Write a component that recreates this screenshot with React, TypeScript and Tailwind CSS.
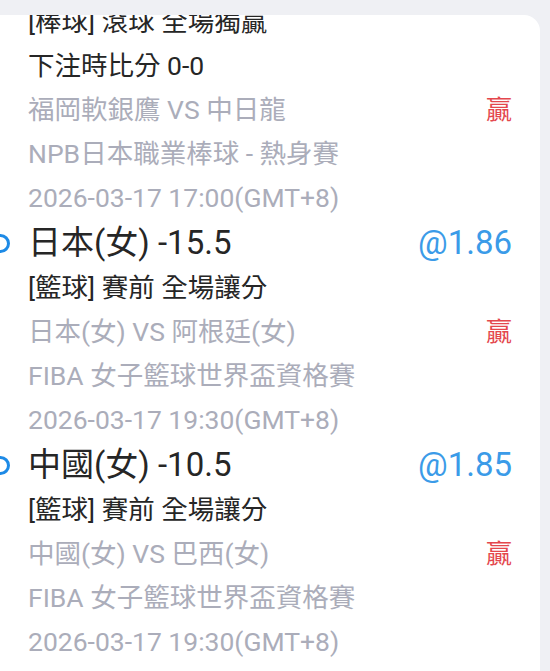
import React from "react";

type Bet = {
  title: string;
  odds: string;
  market: string;
  teams: string;
  league: string;
  date: string;
};

const bets: Bet[] = [
  {
    title: "日本(女) -15.5",
    odds: "@1.86",
    market: "[籃球] 賽前 全場讓分",
    teams: "日本(女) VS 阿根廷(女)",
    league: "FIBA 女子籃球世界盃資格賽",
    date: "2026-03-17 19:30(GMT+8)",
  },
  {
    title: "中國(女) -10.5",
    odds: "@1.85",
    market: "[籃球] 賽前 全場讓分",
    teams: "中國(女) VS 巴西(女)",
    league: "FIBA 女子籃球世界盃資格賽",
    date: "2026-03-17 19:30(GMT+8)",
  },
];

const font = { fontFamily: "Roboto, 'Noto Sans CJK TC', 'Noto Sans', sans-serif" };

function Line({ children, tone = "gray", win = false }: { children: React.ReactNode; tone?: "gray" | "dark"; win?: boolean }) {
  return (
    <div className="flex h-[44px] items-center justify-between pr-[28px] pl-[28px]">
      <span className={tone === "dark" ? "text-[26.5px] text-[#262626]" : "text-[26.5px] text-[#abadba]"}>{children}</span>
      {win && <span className="text-[26px] text-[#e4474d]">贏</span>}
    </div>
  );
}

function Title({ title, odds }: { title: string; odds: string }) {
  return (
    <div className="relative flex h-[46px] items-center justify-between pr-[28px] pl-[28px]">
      <span className="absolute left-[-9px] top-[14px] h-[19px] w-[19px] rounded-full border-[3px] border-[#1d8ae6]" />
      <span className="text-[33px] text-[#262626]">{title}</span>
      <span className="text-[33px] text-[#3b9be8]">{odds}</span>
    </div>
  );
}

export default function App() {
  return (
    <div className="h-[671px] w-[550px] overflow-hidden bg-[#eff0f4]" style={font}>
      <div className="mt-[15px] mr-[10px] h-[700px] overflow-hidden rounded-tr-[16px] bg-white">
        <div className="-mt-[15px]">
          <Line tone="dark">[棒球] 滾球 全場獨贏</Line>
          <Line tone="dark">下注時比分 0-0</Line>
          <Line win>福岡軟銀鷹 VS 中日龍</Line>
          <Line>NPB日本職業棒球 - 熱身賽</Line>
          <Line>2026-03-17 17:00(GMT+8)</Line>
          {bets.map((b, i) => (
            <div key={i}>
              <Title title={b.title} odds={b.odds} />
              <Line tone="dark">{b.market}</Line>
              <Line win>{b.teams}</Line>
              <Line>{b.league}</Line>
              <Line>{b.date}</Line>
            </div>
          ))}
          <Title title="" odds="" />
        </div>
      </div>
    </div>
  );
}
